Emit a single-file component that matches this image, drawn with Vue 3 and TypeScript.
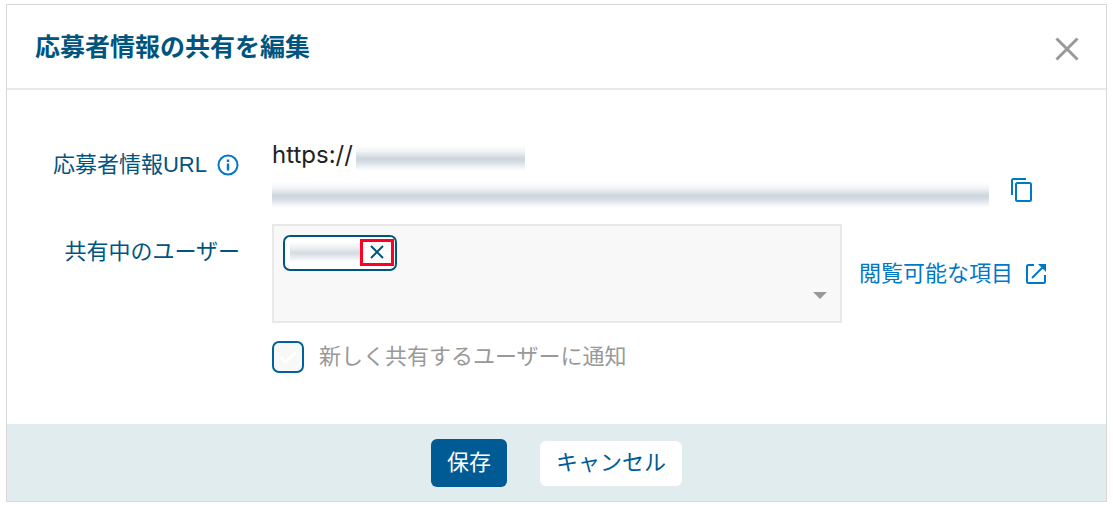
<script setup lang="ts">
import { ref } from 'vue'

const urlScheme = ref('https://')
const notify = ref(true)
const users = ref([{ id: 1 }])

function removeUser(id: number): void {
  users.value = users.value.filter((user) => user.id !== id)
}
</script>

<template>
  <section class="dialog" role="dialog" aria-labelledby="dialog-title">
    <header class="header">
      <h1 id="dialog-title" class="title">応募者情報の共有を編集</h1>
      <button class="icon-button close" type="button" aria-label="閉じる">
        <svg width="24" height="24" viewBox="0 0 24 24" fill="none" stroke="#999" stroke-width="3" aria-hidden="true">
          <path d="M1.5 1.5 22.5 22.5M22.5 1.5 1.5 22.5" />
        </svg>
      </button>
    </header>

    <form class="form" @submit.prevent>
      <div class="body">
        <div class="label url-label">
          <span>応募者情報URL</span>
          <button class="icon-button" type="button" aria-label="説明">
            <svg width="22" height="22" viewBox="0 0 22 22" aria-hidden="true">
              <circle cx="11" cy="11" r="9.5" fill="none" stroke="#0078c8" stroke-width="2" />
              <path d="M9.800 5.500h2.400v2.400h-2.400zM9.800 9.500h2.400v7h-2.400z" fill="#0078c8" />
            </svg>
          </button>
        </div>
        <div class="url-row">
          <div class="url">
            <div class="url-line">
              <span>{{ urlScheme }}</span>
              <span class="redacted redacted-host"></span>
            </div>
            <div class="redacted redacted-path"></div>
          </div>
          <button class="icon-button copy" type="button" aria-label="コピー">
            <svg width="22" height="24" viewBox="0 0 22 24" fill="none" stroke="#0078c8" stroke-width="2" aria-hidden="true">
              <path d="M1 17V2.500Q1 1 2.500 1H15" />
              <rect x="5" y="5" width="15" height="18" rx="1.500" />
            </svg>
          </button>
        </div>

        <div id="users-label" class="label users-label">共有中のユーザー</div>
        <div class="users-row">
          <div class="picker" role="group" aria-labelledby="users-label">
            <div class="chips">
              <span v-for="user in users" :key="user.id" class="chip">
                <span class="chip-name"></span>
                <button class="chip-remove" type="button" aria-label="削除" @click="removeUser(user.id)">
                  <svg width="14" height="14" viewBox="0 0 14 14" fill="none" stroke="#00557f" stroke-width="2" aria-hidden="true">
                    <path d="M1 1 13 13M13 1 1 13" />
                  </svg>
                </button>
              </span>
            </div>
            <button class="icon-button caret" type="button" aria-label="ユーザーを選択">
              <svg width="14" height="7" viewBox="0 0 14 7" aria-hidden="true">
                <path d="M0 0H14L7 7Z" fill="#999" />
              </svg>
            </button>
          </div>
          <a class="link" href="#">
            <span>閲覧可能な項目</span>
            <svg width="20" height="20" viewBox="0 0 20 20" fill="none" stroke="#0078c8" stroke-width="2" aria-hidden="true">
              <path d="M8 1H2.500Q1 1 1 2.500V17.500Q1 19 2.500 19H17.500Q19 19 19 17.500V11" />
              <path d="M6 14 18 2" />
              <path d="M12 0H20V8L17.300 5.300 14.700 2.700Z" fill="#0078c8" stroke="none" />
            </svg>
          </a>
        </div>

        <label class="notify">
          <input v-model="notify" class="checkbox" type="checkbox" disabled />
          <span>新しく共有するユーザーに通知</span>
        </label>
      </div>

      <footer class="footer">
        <button class="button primary" type="submit">保存</button>
        <button class="button secondary" type="button">キャンセル</button>
      </footer>
    </form>
  </section>
</template>

<style>
body {
  background: #fff;
}
</style>

<style scoped>
.dialog {
  margin: 4px 6px 8px;
  border: 1px solid #d8d8d8;
  background: #fff;
  color: #00557f;
  font-family: "Liberation Sans", "Noto Sans CJK JP", sans-serif;
  font-size: 22px;
  line-height: 32px;
}

.header {
  display: flex;
  align-items: center;
  justify-content: space-between;
  padding: 24px 27px 23px 28px;
  border-bottom: 2px solid #e8e8e8;
}

.title {
  margin: 0;
  font-size: 25px;
  line-height: 36px;
  font-weight: 700;
}

button {
  font: inherit;
  cursor: pointer;
}

.icon-button {
  display: flex;
  padding: 0;
  border: 0;
  background: none;
}

.close {
  margin-top: 4px;
}

.body {
  display: grid;
  grid-template-columns: 233px minmax(0, 1fr);
  column-gap: 32px;
  padding: 49px 60px 51px 0;
}

.label {
  display: flex;
  justify-content: flex-end;
  align-items: center;
}

.url-label {
  align-self: start;
  gap: 10px;
  padding: 10px 1px 0 0;
}

.users-label {
  align-self: start;
  padding-top: 12px;
}

.url-row {
  display: flex;
  align-items: flex-end;
  gap: 22px;
  padding: 0 13px 16px 0;
}

.url {
  flex: 1;
  min-width: 0;
}

.url-line {
  display: flex;
  align-items: center;
  gap: 3px;
  color: #222;
  font-family: Inter, "Noto Sans CJK JP", sans-serif;
  font-size: 24px;
}

.redacted {
  height: 26px;
  background: linear-gradient(#fff, #f1f3f5 25%, #cdd5dd 52%, #d5dce3 65%, #f3f5f7 88%, #fff);
}

.redacted-host {
  width: 169px;
  margin-top: 6px;
}

.redacted-path {
  margin-top: 11px;
}

.copy {
  margin-bottom: 6px;
}

.users-row {
  display: flex;
  align-items: center;
  gap: 17px;
}

.picker {
  box-sizing: border-box;
  flex: 1;
  display: flex;
  justify-content: space-between;
  min-height: 99px;
  padding: 9px 13px 9px 9px;
  border: 2px solid #e8e8e8;
  background: #f8f8f8;
}

.chips {
  display: flex;
  flex-wrap: wrap;
  align-items: flex-start;
  gap: 8px;
}

.chip {
  box-sizing: border-box;
  display: flex;
  align-items: center;
  height: 36px;
  padding: 0 1px 2px 5px;
  border: 2px solid #00557f;
  border-radius: 7px;
  background: #fff;
}

.chip-name {
  width: 70px;
  height: 20px;
  background: linear-gradient(#fff, #eceff2 30%, #d3dbe2 55%, #eceff2 80%, #fff);
}

.chip-remove {
  box-sizing: border-box;
  display: flex;
  align-items: center;
  justify-content: center;
  width: 34px;
  height: 27px;
  padding: 0;
  border: 3px solid #ff0024;
  background: #fff;
}

.caret {
  align-self: flex-end;
  padding-bottom: 13px;
}

.link {
  display: flex;
  align-items: center;
  gap: 13px;
  color: #0078c8;
  text-decoration: none;
  white-space: nowrap;
}

.notify {
  grid-column: 2;
  justify-self: start;
  display: flex;
  align-items: center;
  gap: 15px;
  margin-top: 18px;
  color: #999;
}

.checkbox {
  appearance: none;
  box-sizing: border-box;
  width: 32px;
  height: 32px;
  margin: 0;
  border: 2px solid #00629b;
  border-radius: 7px;
  background: #f8f8f8;
}

.checkbox:checked::before {
  content: "";
  display: block;
  box-sizing: border-box;
  width: 16px;
  height: 9px;
  margin: 8px 0 0 6px;
  border: solid #fff;
  border-width: 0 0 3px 3px;
  transform: rotate(-45deg);
}

.footer {
  display: flex;
  align-items: center;
  justify-content: center;
  gap: 33px;
  padding: 15px 0 14px;
  background: #e1ecef;
}

.button {
  padding: 0 16px;
  border: 0;
  border-radius: 6px;
  white-space: nowrap;
}

.primary {
  height: 48px;
  background: #005b95;
  color: #fff;
}

.secondary {
  height: 45px;
  background: #fff;
  color: #005b95;
}
</style>
